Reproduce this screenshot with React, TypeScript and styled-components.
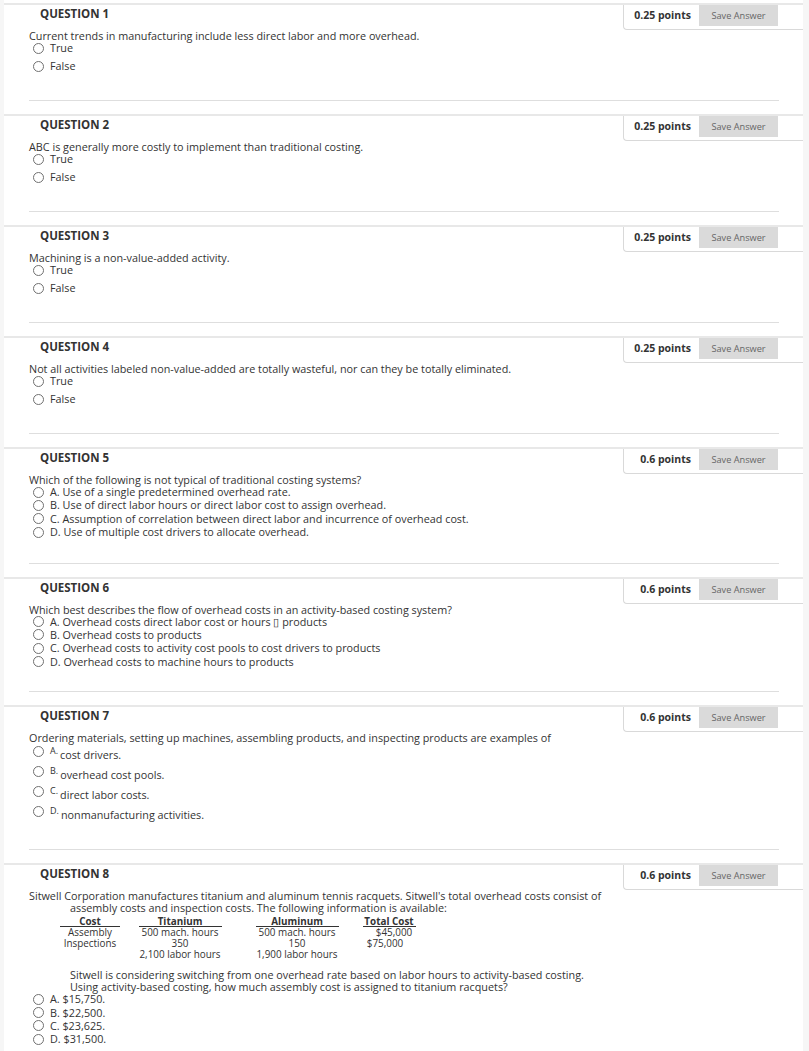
import React from 'react';
import styled, { createGlobalStyle } from 'styled-components';

const Global = createGlobalStyle`
  html, body { margin: 0; padding: 0; background: #f6f6f6; }
  body { font-family: "Open Sans", "Noto Sans", sans-serif; color: #333; }
`;

const Page = styled.main`
  width: 799px;
  margin-left: 4px;
  min-height: 1051px;
  padding-top: 3px;
  box-sizing: border-box;
  background: #fff;
`;

const Block = styled.section`
  border-top: 2px solid #e8e8e8;
`;

const Header = styled.div`
  display: flex;
  justify-content: space-between;
  height: 25px;
`;

const Title = styled.h3`
  margin: 0;
  padding: 3px 0 0 36px;
  font-size: 11.5px;
  line-height: 12px;
  font-weight: 700;
  color: #333;
`;

const PointsBox = styled.div`
  width: 180px;
  box-sizing: border-box;
  border-left: 1px solid #d9d9d9;
  border-bottom: 1px solid #d9d9d9;
  border-bottom-left-radius: 4px;
  display: flex;
  justify-content: flex-end;
  align-items: flex-start;
  gap: 8px;
  padding-right: 25px;
`;

const Points = styled.span`
  font-size: 10.5px;
  font-weight: 700;
  line-height: 21px;
  color: #333;
`;

const SaveButton = styled.button`
  width: 79px;
  height: 21px;
  border: none;
  background: #dadada;
  color: #666;
  font-family: inherit;
  font-size: 9.2px;
  padding: 0;
`;

const Body = styled.div`
  padding-left: 25px;
`;

const Text = styled.p<{ $indent?: number; $mt?: number }>`
  margin: ${(p) => p.$mt ?? 0}px 0 0 0;
  font-size: 10.8px;
  line-height: 12px;
  padding-left: ${(p) => p.$indent ?? 0}px;
`;

const Hanging = styled.p`
  margin: 0;
  font-size: 10.8px;
  line-height: 12px;
  padding-left: 41px;
  text-indent: -41px;
`;

const Options = styled.div`
  display: flex;
  flex-direction: column;
`;

const Option = styled.label<{ $h: number; $pt?: number }>`
  display: flex;
  align-items: flex-start;
  height: ${(p) => p.$h}px;
  padding: ${(p) => p.$pt ?? 0}px 0 0 4px;
  box-sizing: border-box;
  font-size: 10.8px;
  line-height: 12px;
`;

const Radio = styled.span`
  flex: none;
  width: 11px;
  height: 11px;
  margin-top: 0.5px;
  margin-right: 6px;
  border: 1px solid #707070;
  border-radius: 50%;
  box-sizing: border-box;
  background: #fff;
`;

const Letter = styled.span`
  font-size: 9px;
  line-height: 11px;
  margin-right: 2px;
`;

const Lowered = styled.span`
  padding-top: 4px;
`;

const Separator = styled.hr<{ $mt: number }>`
  margin: ${(p) => p.$mt}px 24px 13px 25px;
  border: none;
  border-top: 1px solid #dedede;
  height: 0;
`;

const Table = styled.div`
  display: grid;
  grid-template-columns: 64px 116px 118px 66px;
  grid-auto-rows: 10.8px;
  margin: 2px 0 0 29px;
  font-size: 9.9px;
  line-height: 10.8px;
  justify-items: center;
  white-space: nowrap;
`;

const HeadCell = styled.span<{ $w: number }>`
  display: block;
  width: ${(p) => p.$w}px;
  height: 10.8px;
  box-sizing: border-box;
  text-align: center;
  font-weight: 700;
  border-bottom: 1px solid #333;
  line-height: 10px;
`;

const Cell = styled.span<{ $shift?: number }>`
  position: relative;
  left: ${(p) => p.$shift ?? 0}px;
`;

type Q = {
  n: number;
  points: string;
  text: React.ReactNode;
  options: string[];
  h: number;
  sep: number;
};

const tf = ['True', 'False'];

const QuestionHeader = ({ n, points }: { n: number; points: string }) => (
  <Header>
    <Title>QUESTION {n}</Title>
    <PointsBox>
      <Points>{points}</Points>
      <SaveButton type="button">Save Answer</SaveButton>
    </PointsBox>
  </Header>
);

const simple: Q[] = [
  { n: 1, points: '0.25 points', text: 'Current trends in manufacturing include less direct labor and more overhead.', options: tf, h: 18, sep: 22 },
  { n: 2, points: '0.25 points', text: 'ABC is generally more costly to implement than traditional costing.', options: tf, h: 18, sep: 22 },
  { n: 3, points: '0.25 points', text: 'Machining is a non-value-added activity.', options: tf, h: 18, sep: 22 },
  { n: 4, points: '0.25 points', text: 'Not all activities labeled non-value-added are totally wasteful, nor can they be totally eliminated.', options: tf, h: 18, sep: 22 },
  {
    n: 5,
    points: '0.6 points',
    text: 'Which of the following is not typical of traditional costing systems?',
    options: [
      'A. Use of a single predetermined overhead rate.',
      'B. Use of direct labor hours or direct labor cost to assign overhead.',
      'C. Assumption of correlation between direct labor and incurrence of overhead cost.',
      'D. Use of multiple cost drivers to allocate overhead.',
    ],
    h: 13.4,
    sep: 23,
  },
  {
    n: 6,
    points: '0.6 points',
    text: 'Which best describes the flow of overhead costs in an activity-based costing system?',
    options: [
      'A. Overhead costs direct labor cost or hours \u25AF products',
      'B. Overhead costs to products',
      'C. Overhead costs to activity cost pools to cost drivers to products',
      'D. Overhead costs to machine hours to products',
    ],
    h: 13.4,
    sep: 22,
  },
];

const q7 = [
  ['A.', 'cost drivers.'],
  ['B.', 'overhead cost pools.'],
  ['C.', 'direct labor costs.'],
  ['D.', 'nonmanufacturing activities.'],
];

const q8 = ['A. $15,750.', 'B. $22,500.', 'C. $23,625.', 'D. $31,500.'];

export default function App() {
  return (
    <>
      <Global />
      <Page>
        {simple.map((q) => (
          <Block key={q.n}>
            <QuestionHeader n={q.n} points={q.points} />
            <Body>
              <Text>{q.text}</Text>
              <Options>
                {q.options.map((o) => (
                  <Option key={o} $h={q.h}>
                    <Radio />
                    {o}
                  </Option>
                ))}
              </Options>
            </Body>
            <Separator $mt={q.sep} />
          </Block>
        ))}

        <Block>
          <QuestionHeader n={7} points="0.6 points" />
          <Body>
            <Text>Ordering materials, setting up machines, assembling products, and inspecting products are examples of</Text>
            <Options>
              {q7.map(([l, t]) => (
                <Option key={l} $h={20} $pt={1}>
                  <Radio />
                  <Letter>{l}</Letter>
                  <Lowered>{t}</Lowered>
                </Option>
              ))}
            </Options>
          </Body>
          <Separator $mt={25} />
        </Block>

        <Block>
          <QuestionHeader n={8} points="0.6 points" />
          <Body>
            <Hanging>
              Sitwell Corporation manufactures titanium and aluminum tennis racquets. Sitwell's total overhead costs consist of
              <br />
              assembly costs and inspection costs. The following information is available:
            </Hanging>
            <Table>
              <HeadCell $w={60}>Cost</HeadCell>
              <HeadCell $w={83}>Titanium</HeadCell>
              <HeadCell $w={83}>Aluminum</HeadCell>
              <HeadCell $w={53}>Total Cost</HeadCell>
              <Cell>Assembly</Cell>
              <Cell>500 mach. hours</Cell>
              <Cell>500 mach. hours</Cell>
              <Cell $shift={5}>$45,000</Cell>
              <Cell>Inspections</Cell>
              <Cell>350</Cell>
              <Cell>150</Cell>
              <Cell $shift={-4}>$75,000</Cell>
              <Cell />
              <Cell>2,100 labor hours</Cell>
              <Cell>1,900 labor hours</Cell>
              <Cell />
            </Table>
            <Text $indent={41} $mt={10}>
              Sitwell is considering switching from one overhead rate based on labor hours to activity-based costing.
              <br />
              Using activity-based costing, how much assembly cost is assigned to titanium racquets?
            </Text>
            <Options>
              {q8.map((o) => (
                <Option key={o} $h={13.3}>
                  <Radio />
                  {o}
                </Option>
              ))}
            </Options>
          </Body>
        </Block>
      </Page>
    </>
  );
}
